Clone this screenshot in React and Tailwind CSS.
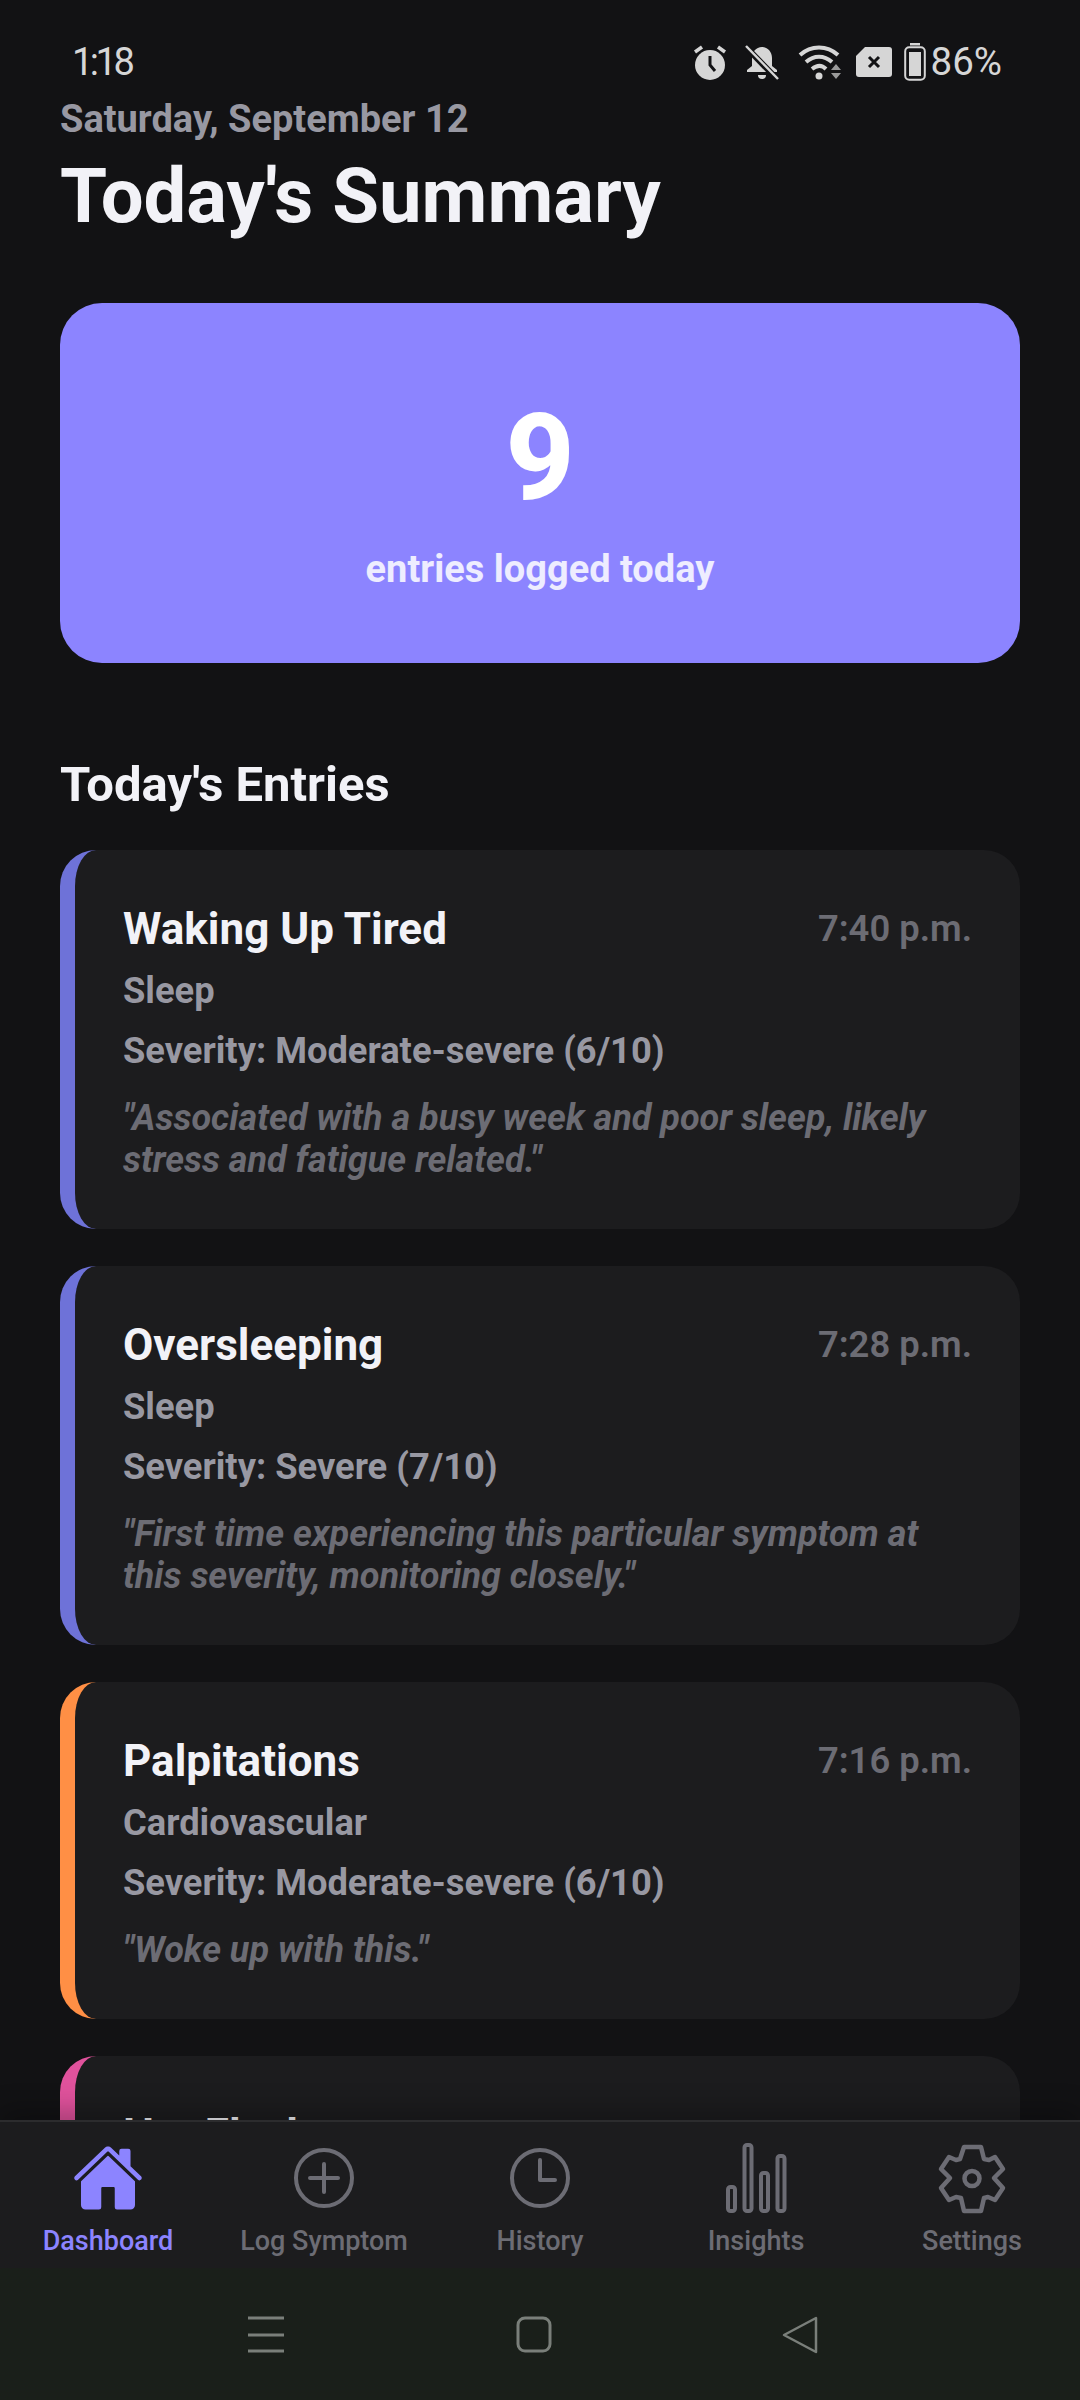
import React from 'react';
import { IoHome } from 'react-icons/io5';

const entries = [
  { title: 'Waking Up Tired', time: '7:40 p.m.', category: 'Sleep', severity: 'Moderate-severe (6/10)', note: '"Associated with a busy week and poor sleep, likely stress and fatigue related."', border: 'border-l-[#6e72d8]' },
  { title: 'Oversleeping', time: '7:28 p.m.', category: 'Sleep', severity: 'Severe (7/10)', note: '"First time experiencing this particular symptom at this severity, monitoring closely."', border: 'border-l-[#6e72d8]' },
  { title: 'Palpitations', time: '7:16 p.m.', category: 'Cardiovascular', severity: 'Moderate-severe (6/10)', note: '"Woke up with this."', border: 'border-l-[#ff8f45]' },
  // only the top of this one shows above the tab bar
  { title: 'Hot Flashes', border: 'border-l-[#e0529c]' },
];

const StatusIcons = () => (
  <div className="flex items-center">
    {/* alarm */}
    <svg width="36" height="36" viewBox="0 0 36 36" className="mr-[17px]">
      <circle cx="18" cy="21" r="15" fill="#d6d6d6" />
      <path d="M18 12v9l5 6" fill="none" stroke="#121214" strokeWidth="3" />
      <path d="M3 8l7-5M33 8l-7-5" stroke="#d6d6d6" strokeWidth="3.5" />
    </svg>
    {/* bell off */}
    <svg width="34" height="36" viewBox="0 0 34 36" className="mr-[19px]">
      <path d="M17 3c6 0 10 5 10 11v8l5 4v2H2v-2l5-4v-8C7 8 11 3 17 3z" fill="#d6d6d6" />
      <path d="M13 31h8a4 4 0 0 1-8 0z" fill="#d6d6d6" />
      <path d="M1 3l31 32" stroke="#121214" strokeWidth="6" />
      <path d="M1 2l32 33" stroke="#d6d6d6" strokeWidth="2.5" />
    </svg>
    {/* wifi */}
    <svg width="44" height="38" viewBox="0 0 44 38" className="mr-[14px]">
      <path d="M2 12C13 2 29 2 40 12" fill="none" stroke="#d6d6d6" strokeWidth="4" />
      <path d="M8 19c8-7 18-7 26 0" fill="none" stroke="#d6d6d6" strokeWidth="4" />
      <path d="M14 26c5-4 10-4 14 0" fill="none" stroke="#d6d6d6" strokeWidth="4" />
      <circle cx="21" cy="33" r="3.5" fill="#d6d6d6" />
      <path d="M33 27l5-6 5 6zM33 30l5 6 5-6z" fill="#9a9a9a" />
    </svg>
    {/* no sim */}
    <svg width="36" height="30" viewBox="0 0 36 30" className="mr-[12px]">
      <path d="M9 0h24a3 3 0 0 1 3 3v24a3 3 0 0 1-3 3H3a3 3 0 0 1-3-3V9z" fill="#d6d6d6" />
      <path d="M13 10l10 10M23 10L13 20" stroke="#121214" strokeWidth="3" />
    </svg>
    {/* battery */}
    <svg width="22" height="38" viewBox="0 0 22 38" className="mr-[5px]">
      <rect x="6" y="0" width="10" height="2.5" fill="#d6d6d6" />
      <rect x="1.2" y="4.2" width="19.6" height="32.6" rx="4" fill="none" stroke="#d6d6d6" strokeWidth="2" />
      <rect x="5" y="9" width="12" height="24" fill="#d6d6d6" />
    </svg>
    <span className="text-[38.5px] leading-none text-[#d6d6d6]">86%</span>
  </div>
);

const EntryCard = ({ entry }) => (
  <div className={`rounded-[36px] border-l-[15px] bg-[#1c1c1e] pl-[48px] pr-[48px] pt-[50px] pb-[48px] ${entry.border}`}>
    <div className="flex items-center justify-between">
      <div className="text-[44px] font-bold leading-[58px] text-[#f2f2f7]">{entry.title}</div>
      {entry.time && <div className="text-[36.4px] font-semibold leading-[58px] text-[#6c6c74]">{entry.time}</div>}
    </div>
    {entry.category && (
      <>
        <div className="mt-[12px] text-[36.3px] font-bold leading-[42px] text-[#9898a2]">{entry.category}</div>
        <div className="mt-[18px] text-[36.3px] font-bold leading-[42px] text-[#9898a2]">Severity: {entry.severity}</div>
        <div className="mt-[25px] text-[36px] font-bold italic leading-[42px] text-[#6c6c74]">{entry.note}</div>
      </>
    )}
  </div>
);

const Gear = () => (
  <svg width="72" height="72" viewBox="26 12 72 72" fill="none" stroke="#6c6c74" strokeWidth="4.5" strokeLinejoin="round">
    <path d="M54 17h17l3 12 5 1 6-3 8 12-9 9 9 10-8 12-7-3-4 1-3 13H54l-3-13-5-1-7 3-8-12 9-10-9-9 8-12 7 3 4-1z" />
    <circle cx="62" cy="48.5" r="7.5" />
  </svg>
);

const navItems = [
  { label: 'Dashboard', active: true, icon: <IoHome size={72} color="#8c84ff" /> },
  {
    label: 'Log Symptom',
    icon: (
      <svg width="64" height="64" viewBox="0 0 64 64" fill="none" stroke="#6c6c74" strokeWidth="4" strokeLinecap="round">
        <circle cx="32" cy="32" r="28" />
        <path d="M32 18v28M18 32h28" />
      </svg>
    ),
  },
  {
    label: 'History',
    icon: (
      <svg width="64" height="64" viewBox="0 0 64 64" fill="none" stroke="#6c6c74" strokeWidth="4" strokeLinecap="round" strokeLinejoin="round">
        <circle cx="32" cy="32" r="28" />
        <path d="M32 14v20h15" />
      </svg>
    ),
  },
  {
    label: 'Insights',
    icon: (
      <svg width="61" height="70" viewBox="0 0 61 70" fill="none" stroke="#6c6c74" strokeWidth="4">
        <rect x="2" y="44" width="7" height="24" rx="2.5" />
        <rect x="18.5" y="2" width="7" height="66" rx="2.5" />
        <rect x="35" y="30" width="7" height="38" rx="2.5" />
        <rect x="51.5" y="13" width="7" height="55" rx="2.5" />
      </svg>
    ),
  },
  { label: 'Settings', icon: <Gear /> },
];

export default function App() {
  return (
    <div className="flex h-[2400px] w-[1080px] flex-col overflow-hidden bg-[#121214] font-['Roboto',sans-serif]">
      {/* Status bar */}
      <div className="flex h-[92px] shrink-0 items-end justify-between pb-[11px] pl-[72px] pr-[78px]">
        <span className="text-[38px] leading-none tracking-[-3.5px] text-[#d6d6d6]">1:18</span>
        <StatusIcons />
      </div>

      {/* Scroll content */}
      <div className="min-h-0 flex-1 overflow-hidden px-[60px]">
        <div className="mt-[5px] text-[38px] font-bold leading-[44px] text-[#9898a2]">Saturday, September 12</div>
        <h1 className="mt-[13px] text-[76px] font-bold leading-[84px] text-[#f2f2f7]">Today's Summary</h1>

        <div className="mt-[65px] flex h-[360px] flex-col items-center rounded-[42px] bg-[#8c84ff] pt-[92px]">
          <div className="text-[120px] font-extrabold leading-[126px] text-white">9</div>
          <div className="mt-[26px] text-[38px] font-bold leading-[44px] text-white/85">entries logged today</div>
        </div>

        <h2 className="mb-[37px] mt-[94px] text-[49px] font-bold leading-[56px] text-[#f2f2f7]">Today's Entries</h2>

        <div className="flex flex-col gap-[37px]">
          {entries.map((entry) => (
            <EntryCard key={entry.title} entry={entry} />
          ))}
        </div>
      </div>

      {/* Tab bar */}
      <div className="flex h-[148px] shrink-0 items-start border-t-2 border-[#2c2c2e] bg-[#1c1c1e] shadow-[0_-10px_24px_rgba(0,0,0,0.25)]">
        {navItems.map((item) => (
          <div key={item.label} className="flex flex-1 flex-col items-center">
            <div className="flex h-[72px] mt-[20px] items-center justify-center">{item.icon}</div>
            <div className={`mt-[11px] text-[27px] font-medium leading-[32px] ${item.active ? 'text-[#8c84ff]' : 'text-[#6c6c74]'}`}>
              {item.label}
            </div>
          </div>
        ))}
      </div>

      {/* System nav */}
      <div className="flex h-[132px] shrink-0 items-start bg-[#1a1f1a] pt-[48px] pl-[248px]">
        <svg width="36" height="38" viewBox="0 0 36 38" stroke="#7a7f7a" strokeWidth="3">
          <path d="M0 2h36M0 19h36M0 35h36" />
        </svg>
        <svg width="36" height="38" viewBox="0 0 36 38" fill="none" stroke="#7a7f7a" strokeWidth="3" className="ml-[232px]">
          <rect x="2" y="2" width="32" height="33" rx="7" />
        </svg>
        <svg width="38" height="38" viewBox="0 0 38 38" fill="none" stroke="#7a7f7a" strokeWidth="2.5" strokeLinejoin="round" className="ml-[229px]">
          <path d="M3 19L35 2v34z" />
        </svg>
      </div>
    </div>
  );
}
